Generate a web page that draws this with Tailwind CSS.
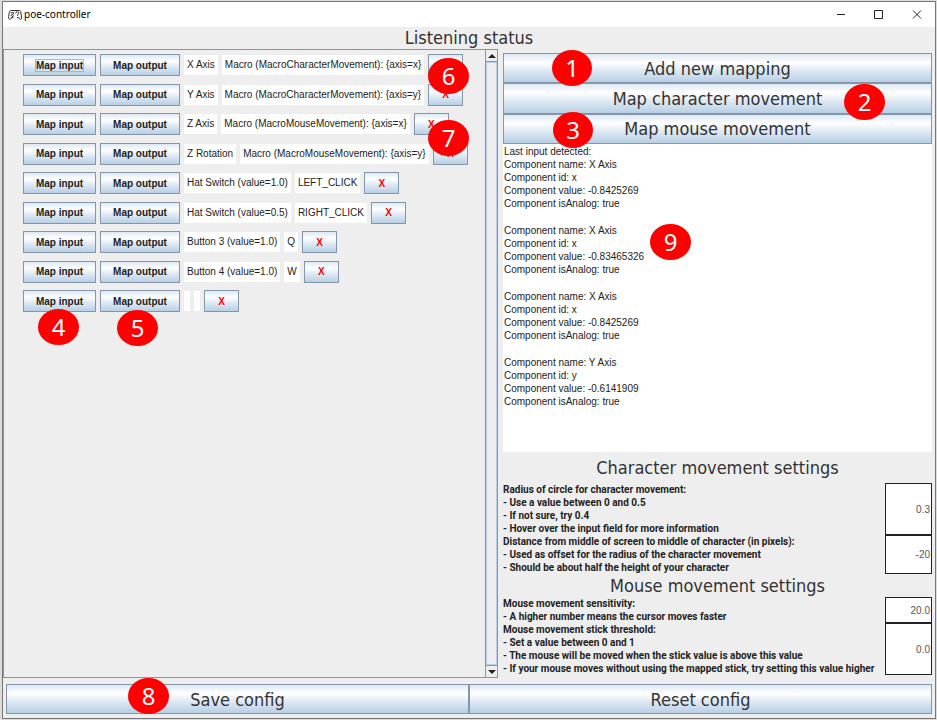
<!DOCTYPE html>
<html lang="en">
<head>
<meta charset="utf-8">
<title>poe-controller</title>
<script src="https://cdn.jsdelivr.net/npm/@tailwindcss/browser@4"></script>
</head>
<body class="bg-[#dcdcdc] font-['Liberation_Sans',Arial,sans-serif] text-[10px] leading-[13px] text-[#222]">
<div class="relative flex min-h-screen flex-col pt-px pr-px pb-px pl-[2px]">
<div class="flex flex-1 flex-col border border-[#777] bg-[#eee]">

  <header class="flex h-[25px] items-center justify-between bg-white pr-[13px] pl-[5px]">
    <div class="flex items-center gap-0.5">
      <svg class="h-3 w-3.5" viewBox="0 0 14 12" fill="none" stroke="#333" stroke-width="1" aria-hidden="true">
        <path d="M2.500 1.500h9q1 0 1.200 1l.8 5.500q.2 2.500-1 2.500-1 0-2-2.500M2.500 1.500Q1.500 2 1.300 3.500L.6 7.500q-.4 2.700.9 2.900 1.200.1 2.300-1.900l2-.5"/>
        <path d="M2.500 4l3-.5-.5 2-2.500 1.200M3 9l2.500-2.500M7.700 4.500q0-1.700 1.600-1.700t1.500 1.500Q10.700 5.500 9.500 5.800v1M9.500 8v1"/>
      </svg>
      <span class="font-['Noto_Sans','Open_Sans',sans-serif] text-[10px] text-black">poe-controller</span>
    </div>
    <div class="flex items-center gap-7">
      <button type="button" aria-label="Minimize"><svg class="size-2.5" viewBox="0 0 10 10" fill="none" stroke="#222"><path d="M1 4.500h8"/></svg></button>
      <button type="button" aria-label="Maximize"><svg class="size-2.5" viewBox="0 0 10 10" fill="none" stroke="#222"><path d="M.5 .5h8v8h-8z"/></svg></button>
      <button type="button" aria-label="Close"><svg class="size-2.5" viewBox="0 0 10 10" fill="none" stroke="#222"><path d="M1 .5l8 8M9 .5l-8 8"/></svg></button>
    </div>
  </header>

  <h1 class="h-[22px] text-center font-['DejaVu_Sans_Condensed','DejaVu_Sans',sans-serif] text-[18px] leading-[22px] text-[#333]">Listening status</h1>

  <main class="grid flex-1 grid-cols-[minmax(0,495fr)_minmax(0,437fr)]">
    <section class="flex border border-[#8496a9]" aria-label="Mappings">
      <ul id="mappings" class="flex h-[262px] flex-1 flex-col justify-between pt-1 pl-[19px]"></ul>
      <div class="flex w-3 flex-col border-l border-[#8496a9]">
        <button type="button" aria-label="Scroll up" class="flex h-3 items-center justify-center border-b border-[#8496a9]"><svg class="h-1 w-2" viewBox="0 0 8 4" fill="#222"><path d="M4 0l4 4H0z"/></svg></button>
        <div class="flex-1 border border-[#b8cfe5]"></div>
        <button type="button" aria-label="Scroll down" class="flex h-3 items-center justify-center border-t border-[#8496a9]"><svg class="h-1 w-2" viewBox="0 0 8 4" fill="#222"><path d="M4 4l4-4H0z"/></svg></button>
      </div>
    </section>

    <section class="flex flex-col pt-1 pr-[3px] pb-[3px] pl-[5px]" aria-label="Controls">
      <div class="grid h-[91px] grid-rows-3 font-['DejaVu_Sans_Condensed','DejaVu_Sans',sans-serif] text-[18px] text-[#333]">
        <button type="button" class="border border-[#8496a9] bg-linear-[180deg,#dde8f3,#fff_30%,#dde8f3_60%,#b8cfe5]">Add new mapping</button>
        <button type="button" class="border border-[#8496a9] bg-linear-[180deg,#dde8f3,#fff_30%,#dde8f3_60%,#b8cfe5]">Map character movement</button>
        <button type="button" class="border border-[#8496a9] bg-linear-[180deg,#dde8f3,#fff_30%,#dde8f3_60%,#b8cfe5]">Map mouse movement</button>
      </div>
      <div role="log" class="flex flex-1 flex-col gap-3.5 bg-white pt-px pl-px">
        <p>Last input detected:<br>Component name: X Axis<br>Component id: x<br>Component value: -0.8425269<br>Component isAnalog: true</p>
        <p>Component name: X Axis<br>Component id: x<br>Component value: -0.83465326<br>Component isAnalog: true</p>
        <p>Component name: X Axis<br>Component id: x<br>Component value: -0.8425269<br>Component isAnalog: true</p>
        <p>Component name: Y Axis<br>Component id: y<br>Component value: -0.6141909<br>Component isAnalog: true</p>
      </div>
      <h2 class="h-[31px] text-center font-['DejaVu_Sans_Condensed','DejaVu_Sans',sans-serif] text-[18px] leading-[31px] text-[#333]">Character movement settings</h2>
      <div class="grid grid-cols-[minmax(0,1fr)_47px] font-['Roboto',sans-serif] font-bold">
        <label for="radius" class="whitespace-nowrap">Radius of circle for character movement:<br>- Use a value between 0 and 0.5<br>- If not sure, try 0.4<br>- Hover over the input field for more information</label>
        <input id="radius" value="0.3" class="w-full border border-[#222] bg-white pr-px text-right font-['Liberation_Sans',sans-serif] font-normal text-[#555]">
        <label for="distance" class="whitespace-nowrap">Distance from middle of screen to middle of character (in pixels):<br>- Used as offset for the radius of the character movement<br>- Should be about half the height of your character</label>
        <input id="distance" value="-20" class="w-full border border-[#222] bg-white pr-px text-right font-['Liberation_Sans',sans-serif] font-normal text-[#555]">
      </div>
      <h2 class="h-[23px] text-center font-['DejaVu_Sans_Condensed','DejaVu_Sans',sans-serif] text-[18px] leading-[23px] text-[#333]">Mouse movement settings</h2>
      <div class="grid grid-cols-[minmax(0,1fr)_47px] font-['Roboto',sans-serif] font-bold">
        <label for="sensitivity" class="whitespace-nowrap">Mouse movement sensitivity:<br>- A higher number means the cursor moves faster</label>
        <input id="sensitivity" value="20.0" class="w-full border border-[#222] bg-white pr-px text-right font-['Liberation_Sans',sans-serif] font-normal text-[#555]">
        <label for="threshold" class="whitespace-nowrap">Mouse movement stick threshold:<br>- Set a value between 0 and 1<br>- The mouse will be moved when the stick value is above this value<br>- If your mouse moves without using the mapped stick, try setting this value higher</label>
        <input id="threshold" value="0.0" class="w-full border border-[#222] bg-white pr-px text-right font-['Liberation_Sans',sans-serif] font-normal text-[#555]">
      </div>
    </section>
  </main>

  <footer class="grid grid-cols-2 px-[3px] pt-1.5 pb-1 font-['DejaVu_Sans_Condensed','DejaVu_Sans',sans-serif] text-[18px] text-[#333]">
    <button type="button" class="h-[30px] border border-[#8496a9] bg-linear-[180deg,#dde8f3,#fff_30%,#dde8f3_60%,#b8cfe5]">Save config</button>
    <button type="button" class="h-[30px] border border-[#8496a9] bg-linear-[180deg,#dde8f3,#fff_30%,#dde8f3_60%,#b8cfe5]">Reset config</button>
  </footer>
</div>

<!-- Numbered callouts -->
<div class="pointer-events-none absolute inset-0 font-['Noto_Sans','Open_Sans',sans-serif] text-2xl leading-9 text-white text-center">
  <span class="absolute top-[50px] left-[552px] h-9 w-10 rounded-[50%] bg-[#f00]">1</span>
  <span class="absolute top-[84px] left-[844px] h-9 w-[41px] rounded-[50%] bg-[#f00]">2</span>
  <span class="absolute top-[112px] left-[553px] h-9 w-10 rounded-[50%] bg-[#f00]">3</span>
  <span class="absolute top-[309px] left-[38px] h-9 w-[41px] rounded-[50%] bg-[#f00]">4</span>
  <span class="absolute top-[310px] left-[117px] h-9 w-[41px] rounded-[50%] bg-[#f00]">5</span>
  <span class="absolute top-[58px] left-[428px] h-9 w-[41px] rounded-[50%] bg-[#f00]">6</span>
  <span class="absolute top-[120px] left-[428px] h-9 w-[41px] rounded-[50%] bg-[#f00]">7</span>
  <span class="absolute top-[678px] left-[128px] h-9 w-[41px] rounded-[50%] bg-[#f00]">8</span>
  <span class="absolute top-[224px] left-[650px] h-9 w-[41px] rounded-[50%] bg-[#f00]">9</span>
</div>
</div>

<script>
const mappings = [
  ["X Axis", "Macro (MacroCharacterMovement): {axis=x}"],
  ["Y Axis", "Macro (MacroCharacterMovement): {axis=y}"],
  ["Z Axis", "Macro (MacroMouseMovement): {axis=x}"],
  ["Z Rotation", "Macro (MacroMouseMovement): {axis=y}"],
  ["Hat Switch (value=1.0)", "LEFT_CLICK"],
  ["Hat Switch (value=0.5)", "RIGHT_CLICK"],
  ["Button 3 (value=1.0)", "Q"],
  ["Button 4 (value=1.0)", "W"],
  ["", ""]
];
document.getElementById("mappings").innerHTML = mappings.map(([input, output], i) => `
  <li class="flex h-[22px] gap-1">
    <button type="button" class="w-[73px] border border-[#8496a9] bg-linear-[180deg,#dde8f3,#fff_30%,#dde8f3_60%,#b8cfe5] font-bold"><span class="${i === 0 ? "outline outline-[#a3b8cc]" : ""}">Map input</span></button>
    <button type="button" class="w-20 border border-[#8496a9] bg-linear-[180deg,#dde8f3,#fff_30%,#dde8f3_60%,#b8cfe5] font-bold">Map output</button>
    <span class="my-px bg-white px-[3px] leading-5">${input}</span>
    <span class="my-px bg-white px-[3px] leading-5">${output}</span>
    <button type="button" class="w-[35px] border border-[#8496a9] bg-linear-[180deg,#dde8f3,#fff_30%,#dde8f3_60%,#b8cfe5] font-bold text-[#f00]">X</button>
  </li>`).join("");
</script>
</body>
</html>
